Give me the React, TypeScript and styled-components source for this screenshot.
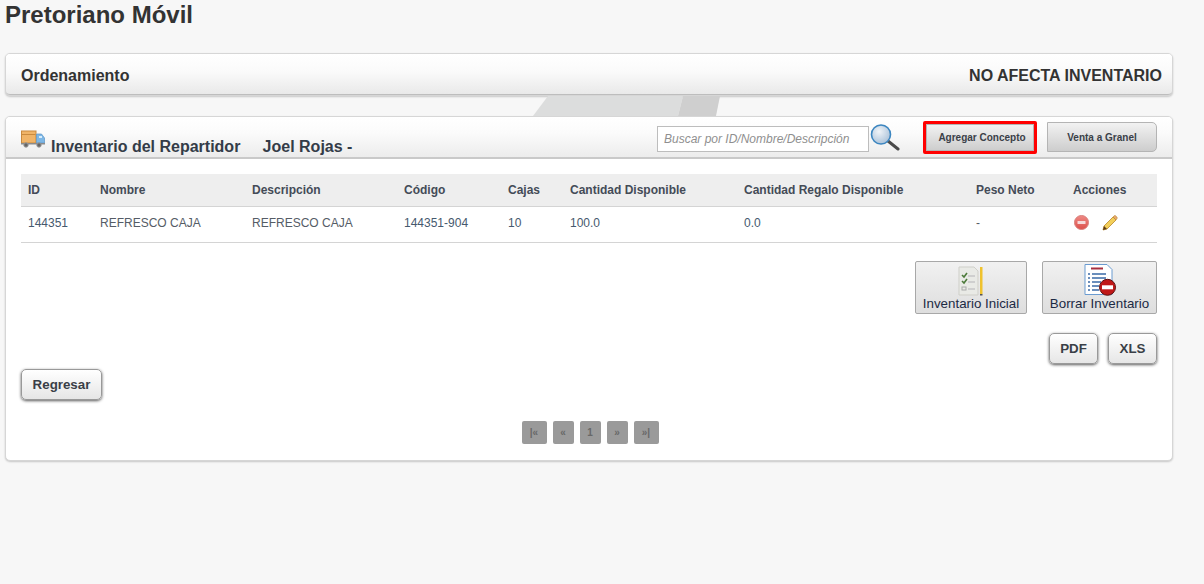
import React from 'react'
import styled, { createGlobalStyle } from 'styled-components'

const GlobalStyle = createGlobalStyle`
  html, body {
    margin: 0;
    padding: 0;
    background: #f7f7f7;
    font-family: "Liberation Sans", Arial, sans-serif;
    color: #333;
  }
`

const Page = styled.div`
  width: 1204px;
  height: 584px;
  overflow: hidden;
  padding: 0 31px 0 5px;
  box-sizing: border-box;
`

const Title = styled.h1`
  margin: 0;
  height: 53px;
  padding-top: 1px;
  box-sizing: border-box;
  font-size: 24px;
  line-height: 28px;
  font-weight: bold;
  color: #333;
`

const Card = styled.section`
  background: #fff;
  border: 1px solid #d6d6d6;
  border-radius: 5px;
  box-shadow: 0 1px 2px rgba(0, 0, 0, 0.2);
`

const TopBar = styled.div`
  height: 41px;
  padding: 3px 10px 0 15px;
  box-sizing: border-box;
  border-radius: 4px;
  border-bottom: 1px solid #bdbdbd;
  background: linear-gradient(#ffffff, #fafafa 45%, #e9e9e9);
  display: flex;
  align-items: center;
  justify-content: space-between;
  font-size: 16px;
  font-weight: bold;
  color: #333;
`

const Band = styled.div`
  height: 20px;
  display: flex;
  padding-left: 528px;
`

const PanelHead = styled.header`
  height: 40px;
  display: flex;
  align-items: center;
  padding: 0 15px;
  border-radius: 4px 4px 0 0;
  border-bottom: 2px solid #c9c9c9;
  background: linear-gradient(#ffffff, #fbfbfb 40%, #ececec);
`

const HeadTitle = styled.div`
  display: flex;
  align-items: flex-start;
  font-size: 16px;
  font-weight: bold;
  color: #333;
  flex: 1;
  height: 40px;
`

const TruckSlot = styled.span`
  display: block;
  width: 24px;
  height: 18px;
  margin: 13px 6px 0 0;
`

const HeadText = styled.span`
  margin-top: 20px;
  line-height: 19px;
  color: #343c48;
  white-space: pre;
`

const SearchBox = styled.div`
  width: 212px;
  height: 26px;
  margin-top: 3px;
  box-sizing: border-box;
  border: 1px solid #bdbdbd;
  background: #fff;
  font-size: 12px;
  font-style: italic;
  line-height: 24px;
  padding-left: 6px;
  color: #8f8f8f;
`

const SearchIcon = styled.span`
  display: block;
  width: 31px;
  height: 27px;
  margin-right: 23px;
`

const RedFrame = styled.div`
  width: 114px;
  height: 33px;
  box-sizing: border-box;
  border: 3px solid #f00;
  border-radius: 2px;
  margin-right: 10px;
  display: flex;
`

const GreyButton = styled.button<{ $w?: number }>`
  width: ${p => (p.$w ? `${p.$w}px` : '100%')};
  height: ${p => (p.$w ? '30px' : '100%')};
  padding: ${p => (p.$w ? '0' : '0 0 0 4px')};
  border: 1px solid #b4b4b4;
  border-radius: ${p => (p.$w ? '0 5px 5px 0' : '0')};
  background: linear-gradient(#f2f2f2, #cdcdcd);
  font-family: inherit;
  font-size: 10px;
  font-weight: bold;
  color: #3a4048;
`

const Body = styled.div`
  padding: 15px 15px 0;
`

const Table = styled.table`
  width: 1136px;
  border-collapse: collapse;
  table-layout: fixed;
  font-size: 12px;
`

const Th = styled.th`
  height: 32px;
  padding: 0 0 0 7px;
  background: #eeeeee;
  border-bottom: 1px solid #d4d4d4;
  text-align: left;
  font-weight: bold;
  color: #444b57;
`

const Td = styled.td`
  height: 36px;
  padding: 0 0 4px 7px;
  box-sizing: border-box;
  border-bottom: 1px solid #d4d4d4;
  color: #555c66;
`

const NumTd = styled(Td)`
  color: #46596e;
`

const Actions = styled.div`
  display: flex;
  align-items: center;
  gap: 13px;
  padding-left: 1px;
`

const ToolRow = styled.div`
  display: flex;
  justify-content: flex-end;
  gap: 15px;
  margin-top: 18px;
`

const ToolButton = styled.button<{ $w: number }>`
  width: ${p => p.$w}px;
  height: 53px;
  padding: 2px 0 0;
  box-sizing: border-box;
  border: 1px solid #a8a8a8;
  border-radius: 2px;
  background: linear-gradient(#f1f1f1, #dedede);
  font-family: inherit;
  font-size: 13.33px;
  line-height: 15px;
  color: #1c2a44;
  display: flex;
  flex-direction: column;
  align-items: center;
  justify-content: flex-start;
`

const IconSlot = styled.span`
  display: flex;
  height: 32px;
  align-items: flex-end;
`

const ExportRow = styled.div`
  display: flex;
  justify-content: flex-end;
  gap: 10px;
  margin-top: 19px;
`

const RaisedButton = styled.button<{ $w: number }>`
  width: ${p => p.$w}px;
  height: 31px;
  padding: 0;
  box-sizing: border-box;
  border: 1px solid #999;
  border-radius: 5px;
  background: linear-gradient(#ffffff, #e6e6e6);
  box-shadow: 0 1px 3px rgba(0, 0, 0, 0.65);
  font-family: inherit;
  font-size: 13.33px;
  font-weight: bold;
  color: #3a3f47;
`

const BackRow = styled.div`
  margin-top: 5px;
`

const Pager = styled.nav`
  display: flex;
  justify-content: center;
  gap: 6px;
  margin-top: 21px;
  padding-left: 2px;
  height: 39px;
`

const PageLink = styled.span<{ $w: number }>`
  width: ${p => p.$w}px;
  height: 23px;
  border-radius: 2px;
  background: #9a9a9a;
  color: #686868;
  font-size: 10px;
  font-weight: bold;
  line-height: 23px;
  text-align: center;
`

const Truck = () => (
  <svg width="24" height="18" viewBox="0 0 24 18">
    <rect x="0.5" y="1" width="14.5" height="12" fill="#f0b468" stroke="#c98a3e" />
    <rect x="1" y="4" width="13.5" height="1" fill="#c98a3e" />
    <path d="M15.5 4h5l3 4v5h-8z" fill="#7db7e6" stroke="#5b93c4" strokeWidth="0.7" />
    <rect x="18" y="6" width="3" height="2" fill="#d6ecfb" />
    <rect x="0" y="13" width="24" height="1.5" fill="#8b8b8b" />
    <circle cx="5" cy="15" r="2.2" fill="#666" stroke="#999" />
    <circle cx="18" cy="15" r="2.2" fill="#666" stroke="#999" />
  </svg>
)

const Magnifier = () => (
  <svg width="31" height="27" viewBox="0 0 31 27">
    <defs>
      <radialGradient id="lens" cx="0.4" cy="0.35" r="0.7">
        <stop offset="0" stopColor="#f0f4f8" />
        <stop offset="1" stopColor="#a8c0d8" />
      </radialGradient>
    </defs>
    <path d="M19 17l10 8" stroke="#4a4a4a" strokeWidth="3" strokeLinecap="round" />
    <circle cx="12" cy="10.5" r="9.5" fill="url(#lens)" stroke="#3c86c0" strokeWidth="1.6" />
  </svg>
)

const MinusBadge = () => (
  <svg width="15" height="15" viewBox="0 0 15 15">
    <defs>
      <linearGradient id="badge" x1="0" y1="0" x2="0" y2="1">
        <stop offset="0" stopColor="#ef8a85" />
        <stop offset="1" stopColor="#dc4f4a" />
      </linearGradient>
    </defs>
    <circle cx="7.5" cy="7.5" r="7" fill="url(#badge)" stroke="#d9807c" />
    <rect x="3.5" y="6" width="8" height="3" rx="0.5" fill="#f6dada" />
  </svg>
)

const Pencil = () => (
  <svg width="16" height="16" viewBox="0 0 16 16">
    <path d="M1 15l1-4L11 2l3 3-9 9z" fill="#f3cf5a" stroke="#b8862a" strokeWidth="0.8" />
    <path d="M11 2l1.2-1.2a1 1 0 0 1 1.4 0l1.4 1.4a1 1 0 0 1 0 1.4L14 5z" fill="#e8a870" stroke="#b8862a" strokeWidth="0.6" />
    <path d="M1 15l1-4 3 3z" fill="#5a3a14" />
  </svg>
)

const ChecklistIcon = () => (
  <svg width="26" height="30" viewBox="0 0 26 30">
    <path d="M1 1h15l4 4v24H1z" fill="#e9eae6" stroke="#cfcfc9" />
    <path d="M4 9l2 2 3-4M4 15l2 2 3-4" fill="none" stroke="#4c7a3a" strokeWidth="1.6" />
    <rect x="4" y="21" width="4" height="3" fill="none" stroke="#aaa" />
    <path d="M10 10h7M10 16h7M10 23h7" stroke="#cfcfcf" strokeWidth="2" />
    <rect x="22" y="1" width="2.5" height="27" fill="#efc22e" />
    <rect x="22" y="28" width="2.5" height="1.5" fill="#555" />
  </svg>
)

const DeleteDocIcon = () => (
  <svg width="34" height="32" viewBox="0 0 34 32">
    <path d="M2 0.5h22l5 5V30.5H2z" fill="#fff" stroke="#6b9bd0" />
    <rect x="8" y="3.5" width="12" height="2" fill="#a83040" />
    <path d="M5 10h2M9 10h14M5 14h2M9 14h14M5 18h2M9 18h9M5 22h2M9 22h7M5 26h2M9 26h7" stroke="#3a6aa6" strokeWidth="1.4" />
    <circle cx="24.5" cy="23.3" r="8" fill="#c01818" stroke="#5a1010" />
    <rect x="19" y="21.3" width="11" height="4" fill="#fff" />
  </svg>
)

const columns = [
  ['ID', 72],
  ['Nombre', 152],
  ['Descripción', 152],
  ['Código', 104],
  ['Cajas', 62],
  ['Cantidad Disponible', 174],
  ['Cantidad Regalo Disponible', 232],
  ['Peso Neto', 97],
  ['Acciones', 91],
] as const

const pages = [
  ['|«', 25],
  ['«', 21],
  ['1', 21],
  ['»', 21],
  ['»|', 25],
] as const

export default function App() {
  return (
    <Page>
      <GlobalStyle />
      <Title>Pretoriano Móvil</Title>

      <Card>
        <TopBar>
          <span>Ordenamiento</span>
          <span>NO AFECTA INVENTARIO</span>
        </TopBar>
      </Card>

      <Band>
        <svg width="188" height="20" viewBox="0 0 188 20">
          <path d="M15 0H150L145 20H0z" fill="#dcdddd" />
          <path d="M150 0H187L183 20H145z" fill="#cfcfcf" />
        </svg>
      </Band>

      <Card>
        <PanelHead>
          <HeadTitle>
            <TruckSlot>
              <Truck />
            </TruckSlot>
            <HeadText>{'Inventario del Repartidor     Joel Rojas -'}</HeadText>
          </HeadTitle>
          <SearchBox>Buscar por ID/Nombre/Descripción</SearchBox>
          <SearchIcon>
            <Magnifier />
          </SearchIcon>
          <RedFrame>
            <GreyButton>Agregar Concepto</GreyButton>
          </RedFrame>
          <GreyButton $w={110}>Venta a Granel</GreyButton>
        </PanelHead>

        <Body>
          <Table>
            <colgroup>
              {columns.map(([name, w]) => (
                <col key={name} width={w} />
              ))}
            </colgroup>
            <thead>
              <tr>
                {columns.map(([name]) => (
                  <Th key={name}>{name}</Th>
                ))}
              </tr>
            </thead>
            <tbody>
              <tr>
                <NumTd>144351</NumTd>
                <Td>REFRESCO CAJA</Td>
                <Td>REFRESCO CAJA</Td>
                <NumTd>144351-904</NumTd>
                <NumTd>10</NumTd>
                <NumTd>100.0</NumTd>
                <NumTd>0.0</NumTd>
                <Td>-</Td>
                <Td>
                  <Actions>
                    <MinusBadge />
                    <Pencil />
                  </Actions>
                </Td>
              </tr>
            </tbody>
          </Table>

          <ToolRow>
            <ToolButton $w={112}>
              <IconSlot>
                <ChecklistIcon />
              </IconSlot>
              Inventario Inicial
            </ToolButton>
            <ToolButton $w={115}>
              <IconSlot>
                <DeleteDocIcon />
              </IconSlot>
              Borrar Inventario
            </ToolButton>
          </ToolRow>

          <ExportRow>
            <RaisedButton $w={49}>PDF</RaisedButton>
            <RaisedButton $w={49}>XLS</RaisedButton>
          </ExportRow>

          <BackRow>
            <RaisedButton $w={81}>Regresar</RaisedButton>
          </BackRow>

          <Pager>
            {pages.map(([label, w]) => (
              <PageLink key={label} $w={w}>
                {label}
              </PageLink>
            ))}
          </Pager>
        </Body>
      </Card>
    </Page>
  )
}
